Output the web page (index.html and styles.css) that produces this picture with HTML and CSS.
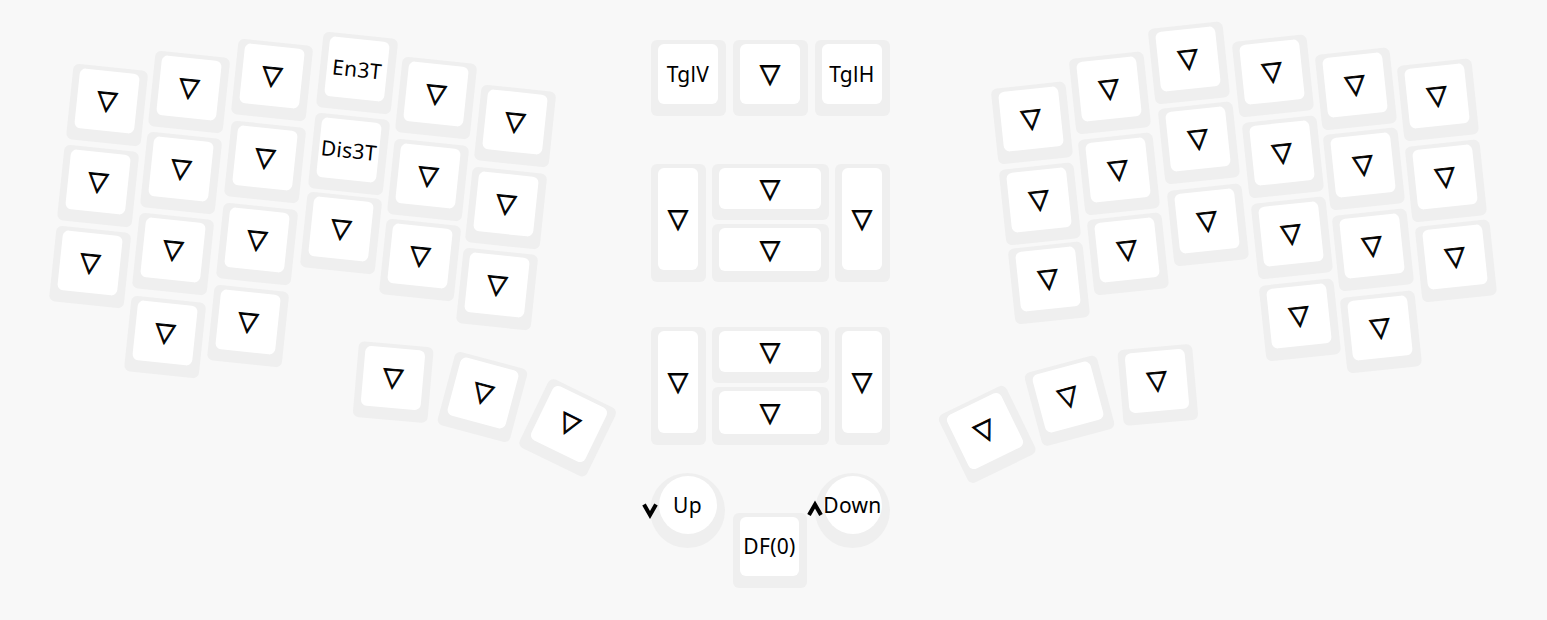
FILE: index.html
```html
<!DOCTYPE html>
<html lang="ja">
<head>
<meta charset="utf-8">
<title>Keymap</title>
<link rel="stylesheet" href="styles.css">
</head>
<body>
<div class="board">
  <div class="half half-left">
    <div class="key" style="--x:107;--y:101;--r:6"><div class="cap"><span class="tri">▽</span></div></div>
    <div class="key" style="--x:189;--y:88;--r:6"><div class="cap"><span class="tri">▽</span></div></div>
    <div class="key" style="--x:272;--y:76;--r:6"><div class="cap"><span class="tri">▽</span></div></div>
    <div class="key" style="--x:357;--y:69;--r:6"><div class="cap"><span class="label">En3T</span></div></div>
    <div class="key" style="--x:436;--y:94;--r:6"><div class="cap"><span class="tri">▽</span></div></div>
    <div class="key" style="--x:515;--y:122;--r:6"><div class="cap"><span class="tri">▽</span></div></div>

    <div class="key" style="--x:98;--y:182;--r:6"><div class="cap"><span class="tri">▽</span></div></div>
    <div class="key" style="--x:181;--y:169;--r:6"><div class="cap"><span class="tri">▽</span></div></div>
    <div class="key" style="--x:265;--y:158;--r:6"><div class="cap"><span class="tri">▽</span></div></div>
    <div class="key" style="--x:349;--y:150;--r:6"><div class="cap"><span class="label">Dis3T</span></div></div>
    <div class="key" style="--x:428;--y:176;--r:6"><div class="cap"><span class="tri">▽</span></div></div>
    <div class="key" style="--x:506;--y:204;--r:6"><div class="cap"><span class="tri">▽</span></div></div>

    <div class="key" style="--x:90;--y:263;--r:6"><div class="cap"><span class="tri">▽</span></div></div>
    <div class="key" style="--x:173;--y:250;--r:6"><div class="cap"><span class="tri">▽</span></div></div>
    <div class="key" style="--x:257;--y:240;--r:6"><div class="cap"><span class="tri">▽</span></div></div>
    <div class="key" style="--x:341;--y:229;--r:6"><div class="cap"><span class="tri">▽</span></div></div>
    <div class="key" style="--x:420;--y:256;--r:6"><div class="cap"><span class="tri">▽</span></div></div>
    <div class="key" style="--x:497;--y:285;--r:6"><div class="cap"><span class="tri">▽</span></div></div>

    <div class="key" style="--x:165;--y:333;--r:6"><div class="cap"><span class="tri">▽</span></div></div>
    <div class="key" style="--x:248;--y:322;--r:6"><div class="cap"><span class="tri">▽</span></div></div>

    <div class="key" style="--x:393;--y:378;--r:5"><div class="cap"><span class="tri">▽</span></div></div>
    <div class="key" style="--x:483;--y:393;--r:15"><div class="cap"><span class="tri">▽</span></div></div>
    <div class="key" style="--x:569;--y:424;--r:26"><div class="cap"><span class="tri">▽</span></div></div>
  </div>

  <div class="center">
    <div class="toggle-row">
      <div class="ckey"><div class="cap"><span class="label">TglV</span></div></div>
      <div class="ckey"><div class="cap"><span class="tri">▽</span></div></div>
      <div class="ckey"><div class="cap"><span class="label">TglH</span></div></div>
    </div>

    <div class="cluster">
      <div class="ckey tall"><div class="cap"><span class="tri">▽</span></div></div>
      <div class="ckey wide"><div class="cap"><span class="tri">▽</span></div></div>
      <div class="ckey tall"><div class="cap"><span class="tri">▽</span></div></div>
      <div class="ckey wide"><div class="cap"><span class="tri">▽</span></div></div>
    </div>

    <div class="cluster cluster-second">
      <div class="ckey tall"><div class="cap"><span class="tri">▽</span></div></div>
      <div class="ckey wide"><div class="cap"><span class="tri">▽</span></div></div>
      <div class="ckey tall"><div class="cap"><span class="tri">▽</span></div></div>
      <div class="ckey wide"><div class="cap"><span class="tri">▽</span></div></div>
    </div>

    <div class="encoder-row">
      <div class="knob">
        <svg class="chev" width="18" height="19" viewBox="0 0 18 19"><polyline points="3,4.5 9,15 15,4.5" fill="none" stroke="#000" stroke-width="4" stroke-linejoin="miter"/></svg>
        <div class="knob-top"><span class="label">Up</span></div>
      </div>
      <div class="ckey df"><div class="cap"><span class="label">DF(0)</span></div></div>
      <div class="knob">
        <svg class="chev" width="18" height="19" viewBox="0 0 18 19"><polyline points="3,15 9,4.5 15,15" fill="none" stroke="#000" stroke-width="4" stroke-linejoin="miter"/></svg>
        <div class="knob-top"><span class="label">Down</span></div>
      </div>
    </div>
  </div>

  <div class="half half-right">
    <div class="key" style="--x:141;--y:119;--r:-6"><div class="cap"><span class="tri">▽</span></div></div>
    <div class="key" style="--x:219;--y:89;--r:-6"><div class="cap"><span class="tri">▽</span></div></div>
    <div class="key" style="--x:298;--y:59;--r:-6"><div class="cap"><span class="tri">▽</span></div></div>
    <div class="key" style="--x:382;--y:72;--r:-6"><div class="cap"><span class="tri">▽</span></div></div>
    <div class="key" style="--x:465;--y:85;--r:-6"><div class="cap"><span class="tri">▽</span></div></div>
    <div class="key" style="--x:547;--y:96;--r:-6"><div class="cap"><span class="tri">▽</span></div></div>

    <div class="key" style="--x:149;--y:200;--r:-6"><div class="cap"><span class="tri">▽</span></div></div>
    <div class="key" style="--x:228;--y:170;--r:-6"><div class="cap"><span class="tri">▽</span></div></div>
    <div class="key" style="--x:308;--y:139;--r:-6"><div class="cap"><span class="tri">▽</span></div></div>
    <div class="key" style="--x:392;--y:153;--r:-6"><div class="cap"><span class="tri">▽</span></div></div>
    <div class="key" style="--x:473;--y:165;--r:-6"><div class="cap"><span class="tri">▽</span></div></div>
    <div class="key" style="--x:555;--y:177;--r:-6"><div class="cap"><span class="tri">▽</span></div></div>

    <div class="key" style="--x:158;--y:279;--r:-6"><div class="cap"><span class="tri">▽</span></div></div>
    <div class="key" style="--x:237;--y:250;--r:-6"><div class="cap"><span class="tri">▽</span></div></div>
    <div class="key" style="--x:317;--y:221;--r:-6"><div class="cap"><span class="tri">▽</span></div></div>
    <div class="key" style="--x:401;--y:234;--r:-6"><div class="cap"><span class="tri">▽</span></div></div>
    <div class="key" style="--x:482;--y:246;--r:-6"><div class="cap"><span class="tri">▽</span></div></div>
    <div class="key" style="--x:565;--y:257;--r:-6"><div class="cap"><span class="tri">▽</span></div></div>

    <div class="key" style="--x:409;--y:316;--r:-6"><div class="cap"><span class="tri">▽</span></div></div>
    <div class="key" style="--x:490;--y:328;--r:-6"><div class="cap"><span class="tri">▽</span></div></div>

    <div class="key" style="--x:267;--y:381;--r:-5"><div class="cap"><span class="tri">▽</span></div></div>
    <div class="key" style="--x:178;--y:397;--r:-15"><div class="cap"><span class="tri">▽</span></div></div>
    <div class="key" style="--x:95;--y:431;--r:-26"><div class="cap"><span class="tri">▽</span></div></div>
  </div>
</div>
</body>
</html>
```

FILE: styles.css
```css
html, body {
  margin: 0;
  padding: 0;
  background: #f8f8f8;
}

body {
  font-family: "Noto Sans", "Liberation Sans", sans-serif;
  color: #000;
}

.board {
  display: flex;
  width: 1547px;
  height: 620px;
  overflow: hidden;
}

.half {
  position: relative;
  height: 620px;
}

.half-left {
  width: 651px;
}

.half-right {
  width: 657px;
}

/* a key cap shell: light grey base, white top */
.key,
.ckey {
  box-sizing: border-box;
  background: #efefef;
  border-radius: 6px;
  padding: 4px 8px 12px 7px;
  display: flex;
}

.key {
  position: absolute;
  width: 75px;
  height: 76px;
  left: calc(var(--x) * 1px - 37px);
  top: calc(var(--y) * 1px - 34px);
  transform-origin: 37px 34px;
  transform: rotate(calc(var(--r) * 1deg));
}

.cap {
  flex: 1;
  background: #fff;
  border-radius: 6px;
  display: flex;
  align-items: center;
  justify-content: center;
}

.tri {
  font-family: "DejaVu Sans", sans-serif;
  font-size: 26px;
  line-height: 1;
  -webkit-text-stroke: 0.9px #000;
  margin-top: -2px;
}

.label {
  font-size: 21px;
  line-height: 1;
  letter-spacing: 0.3px;
  white-space: nowrap;
}

/* centre column */
.center {
  width: 239px;
  padding-top: 40px;
  display: flex;
  flex-direction: column;
}

.toggle-row {
  display: flex;
  justify-content: space-between;
}

.toggle-row .ckey {
  width: 75px;
  height: 76px;
}

.cluster {
  margin-top: 48px;
  display: grid;
  grid-template-columns: 55px 1fr 55px;
  grid-template-rows: 56px 58px;
  column-gap: 6px;
  row-gap: 4px;
}

.cluster-second {
  margin-top: 45px;
}

.ckey.tall {
  grid-row: span 2;
}

.ckey.wide {
  padding: 4px 8px 11px 7px;
}

.encoder-row {
  margin-top: 28px;
  margin-left: -1px;
  display: flex;
  justify-content: space-between;
  align-items: flex-start;
}

.ckey.df {
  width: 74px;
  height: 75px;
  margin-top: 40px;
}

.knob {
  position: relative;
  width: 75px;
  height: 75px;
  border-radius: 50%;
  background: #efefef;
}

.knob-top {
  position: absolute;
  left: 8.5px;
  top: 3px;
  width: 58px;
  height: 58px;
  border-radius: 50%;
  background: #fff;
  display: flex;
  align-items: center;
  justify-content: center;
}

.chev {
  position: absolute;
  left: -9px;
  top: 27px;
  z-index: 1;
}
```
